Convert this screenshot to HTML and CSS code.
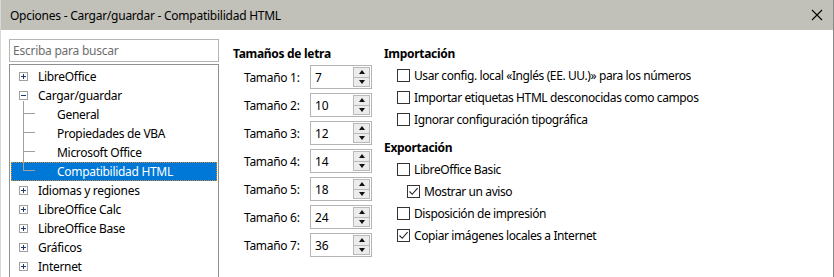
FILE: index.html
```html
<!DOCTYPE html>
<html lang="es">
<head>
<meta charset="utf-8">
<link rel="stylesheet" href="styles.css">
</head>
<body>
<div class="window">
  <div class="titlebar">
    <span class="title">Opciones - Cargar/guardar - Compatibilidad HTML</span>
    <svg class="close" width="12" height="12" viewBox="0 0 12 12"><path d="M1 1 L11 11 M11 1 L1 11" stroke="#000" stroke-width="1.1" fill="none"/></svg>
  </div>
  <div class="content">
    <div class="left">
      <div class="search">Escriba para buscar</div>
      <div class="tree">
        <div class="row"><span class="exp"></span><span>LibreOffice</span></div>
        <div class="row"><span class="exp minus"></span><span>Cargar/guardar</span></div>
        <div class="row child first"><span class="line"></span><span>General</span></div>
        <div class="row child"><span class="line"></span><span>Propiedades de VBA</span></div>
        <div class="row child"><span class="line"></span><span>Microsoft Office</span></div>
        <div class="row child selected"><span class="line last"></span><span class="sel">Compatibilidad HTML</span></div>
        <div class="row"><span class="exp"></span><span>Idiomas y regiones</span></div>
        <div class="row"><span class="exp"></span><span>LibreOffice Calc</span></div>
        <div class="row"><span class="exp"></span><span>LibreOffice Base</span></div>
        <div class="row"><span class="exp"></span><span>Gráficos</span></div>
        <div class="row"><span class="exp"></span><span>Internet</span></div>
      </div>
    </div>
    <div class="middle">
      <div class="heading">Tamaños de letra</div>
      <div class="spinrow"><span class="lbl">Tamaño 1:</span><div class="spin"><span class="val">7</span><span class="btns"><span class="up"></span><span class="down"></span></span></div></div>
      <div class="spinrow"><span class="lbl">Tamaño 2:</span><div class="spin"><span class="val">10</span><span class="btns"><span class="up"></span><span class="down"></span></span></div></div>
      <div class="spinrow"><span class="lbl">Tamaño 3:</span><div class="spin"><span class="val">12</span><span class="btns"><span class="up"></span><span class="down"></span></span></div></div>
      <div class="spinrow"><span class="lbl">Tamaño 4:</span><div class="spin"><span class="val">14</span><span class="btns"><span class="up"></span><span class="down"></span></span></div></div>
      <div class="spinrow"><span class="lbl">Tamaño 5:</span><div class="spin"><span class="val">18</span><span class="btns"><span class="up"></span><span class="down"></span></span></div></div>
      <div class="spinrow"><span class="lbl">Tamaño 6:</span><div class="spin"><span class="val">24</span><span class="btns"><span class="up"></span><span class="down"></span></span></div></div>
      <div class="spinrow"><span class="lbl">Tamaño 7:</span><div class="spin"><span class="val">36</span><span class="btns"><span class="up"></span><span class="down"></span></span></div></div>
    </div>
    <div class="right">
      <div class="heading">Importación</div>
      <div class="check"><span class="box"></span><span>Usar config. local «Inglés (EE. UU.)» para los números</span></div>
      <div class="check"><span class="box"></span><span>Importar etiquetas HTML desconocidas como campos</span></div>
      <div class="check"><span class="box"></span><span>Ignorar configuración tipográfica</span></div>
      <div class="heading second">Exportación</div>
      <div class="check"><span class="box"></span><span>LibreOffice Basic</span></div>
      <div class="check sub"><span class="box"><svg width="11" height="11" viewBox="0 0 11 11"><path d="M1.5 5.5 L4.2 8.3 L9.6 2.2" stroke="#222" stroke-width="1.1" fill="none"/></svg></span><span>Mostrar un aviso</span></div>
      <div class="check"><span class="box"></span><span>Disposición de impresión</span></div>
      <div class="check"><span class="box"><svg width="11" height="11" viewBox="0 0 11 11"><path d="M1.5 5.5 L4.2 8.3 L9.6 2.2" stroke="#222" stroke-width="1.1" fill="none"/></svg></span><span>Copiar imágenes locales a Internet</span></div>
    </div>
  </div>
</div>
</body>
</html>
```

FILE: styles.css
```css
* { box-sizing: border-box; }
html, body { margin: 0; padding: 0; }
body {
  width: 834px;
  height: 277px;
  overflow: hidden;
  font-family: "Noto Sans", "Open Sans", sans-serif;
  font-size: 12px;
  color: #000;
  background: #fff;
}
.window {
  width: 834px;
  height: 277px;
  display: flex;
  flex-direction: column;
  border-right: 1px solid #8a8a8a;
  border-left: 1px solid #d8d8d8;
  overflow: hidden;
}
.titlebar {
  height: 30px;
  flex: none;
  background: #c1c0b9;
  display: flex;
  align-items: center;
  justify-content: space-between;
  padding: 0 10px 0 9px;
}
.title { font-size: 12px; letter-spacing: -0.25px; }
.content {
  flex: 1;
  display: flex;
  padding: 9px 0 0 8px;
  overflow: hidden;
}
.left {
  width: 210px;
  flex: none;
  display: flex;
  flex-direction: column;
  gap: 2px;
}
.search {
  height: 23px;
  border: 1px solid #b4b4b4;
  color: #6d6d6d;
  padding: 0 3px;
  line-height: 21px;
  letter-spacing: -0.25px;
}
.tree {
  flex: 1;
  border: 1px solid #8f8f8f;
  border-bottom: none;
  padding: 2px 1px 0 1px;
}
.row {
  height: 19px;
  display: flex;
  align-items: center;
  position: relative;
  letter-spacing: -0.3px;
}
.exp {
  width: 9px;
  height: 9px;
  border: 1px solid #a0a0a0;
  margin: 0 10px 0 8px;
  position: relative;
  flex: none;
}
.exp::before {
  content: "";
  position: absolute;
  left: 1px; top: 3px;
  width: 5px; height: 1px;
  background: #1c3c70;
}
.exp::after {
  content: "";
  position: absolute;
  left: 3px; top: 1px;
  width: 1px; height: 5px;
  background: #1c3c70;
}
.exp.minus::after { display: none; }
.child { padding-left: 46px; }
.line {
  position: absolute;
  left: 12px;
  top: -1px;
  width: 12px;
  height: 10px;
  border-left: 1px solid #a0a0a0;
  border-bottom: 1px solid #a0a0a0;
}
.line::before {
  content: "";
  position: absolute;
  left: -1px;
  top: 10px;
  height: 10px;
  border-left: 1px solid #a0a0a0;
}
.line.last::before { display: none; }
.row.child.first .line { top: -4px; height: 13px; }
.row.child.first .line::before { top: 13px; }
.selected {
  background: #0078d7;
  color: #fff;
  outline: 1px dotted #d08a3a;
  outline-offset: -1px;
}
.middle {
  width: 151px;
  flex: none;
  margin-left: 14px;
  padding-top: 6px;
  display: flex;
  flex-direction: column;
}
.heading {
  font-weight: bold;
  height: 17px;
  line-height: 17px;
  letter-spacing: -0.3px;
}
.middle .heading { margin-bottom: 3px; }
.spinrow {
  height: 24px;
  margin-bottom: 4px;
  display: flex;
  align-items: center;
  padding-left: 11px;
}
.lbl { width: 66px; letter-spacing: -0.3px; }
.spin {
  width: 62px;
  height: 24px;
  border: 1px solid #b4b4b4;
  display: flex;
  align-items: center;
  justify-content: space-between;
  padding: 0 1px 0 4px;
}
.val { color: #000; }
.btns {
  width: 17px;
  height: 20px;
  display: flex;
  flex-direction: column;
  border: 1px solid #b9b9b9;
  background: #ececec;
}
.up, .down {
  flex: 1;
  display: flex;
  align-items: center;
  justify-content: center;
}
.up { border-bottom: 1px solid #b9b9b9; }
.up::after {
  content: "";
  border-left: 3.5px solid transparent;
  border-right: 3.5px solid transparent;
  border-bottom: 4px solid #111;
}
.down::after {
  content: "";
  border-left: 3.5px solid transparent;
  border-right: 3.5px solid transparent;
  border-top: 4px solid #111;
}
.right {
  flex: 1;
  padding-top: 6px;
  display: flex;
  flex-direction: column;
}
.right .heading { margin-bottom: 2px; }
.right .heading.second { margin-top: 9px; }
.check {
  height: 22px;
  display: flex;
  align-items: center;
  padding-left: 13px;
  letter-spacing: -0.4px;
}
.check.sub { padding-left: 23px; }
.box {
  width: 13px;
  height: 13px;
  border: 1px solid #333;
  background: #fff;
  margin-right: 4px;
  flex: none;
  display: flex;
  align-items: center;
  justify-content: center;
}
```
